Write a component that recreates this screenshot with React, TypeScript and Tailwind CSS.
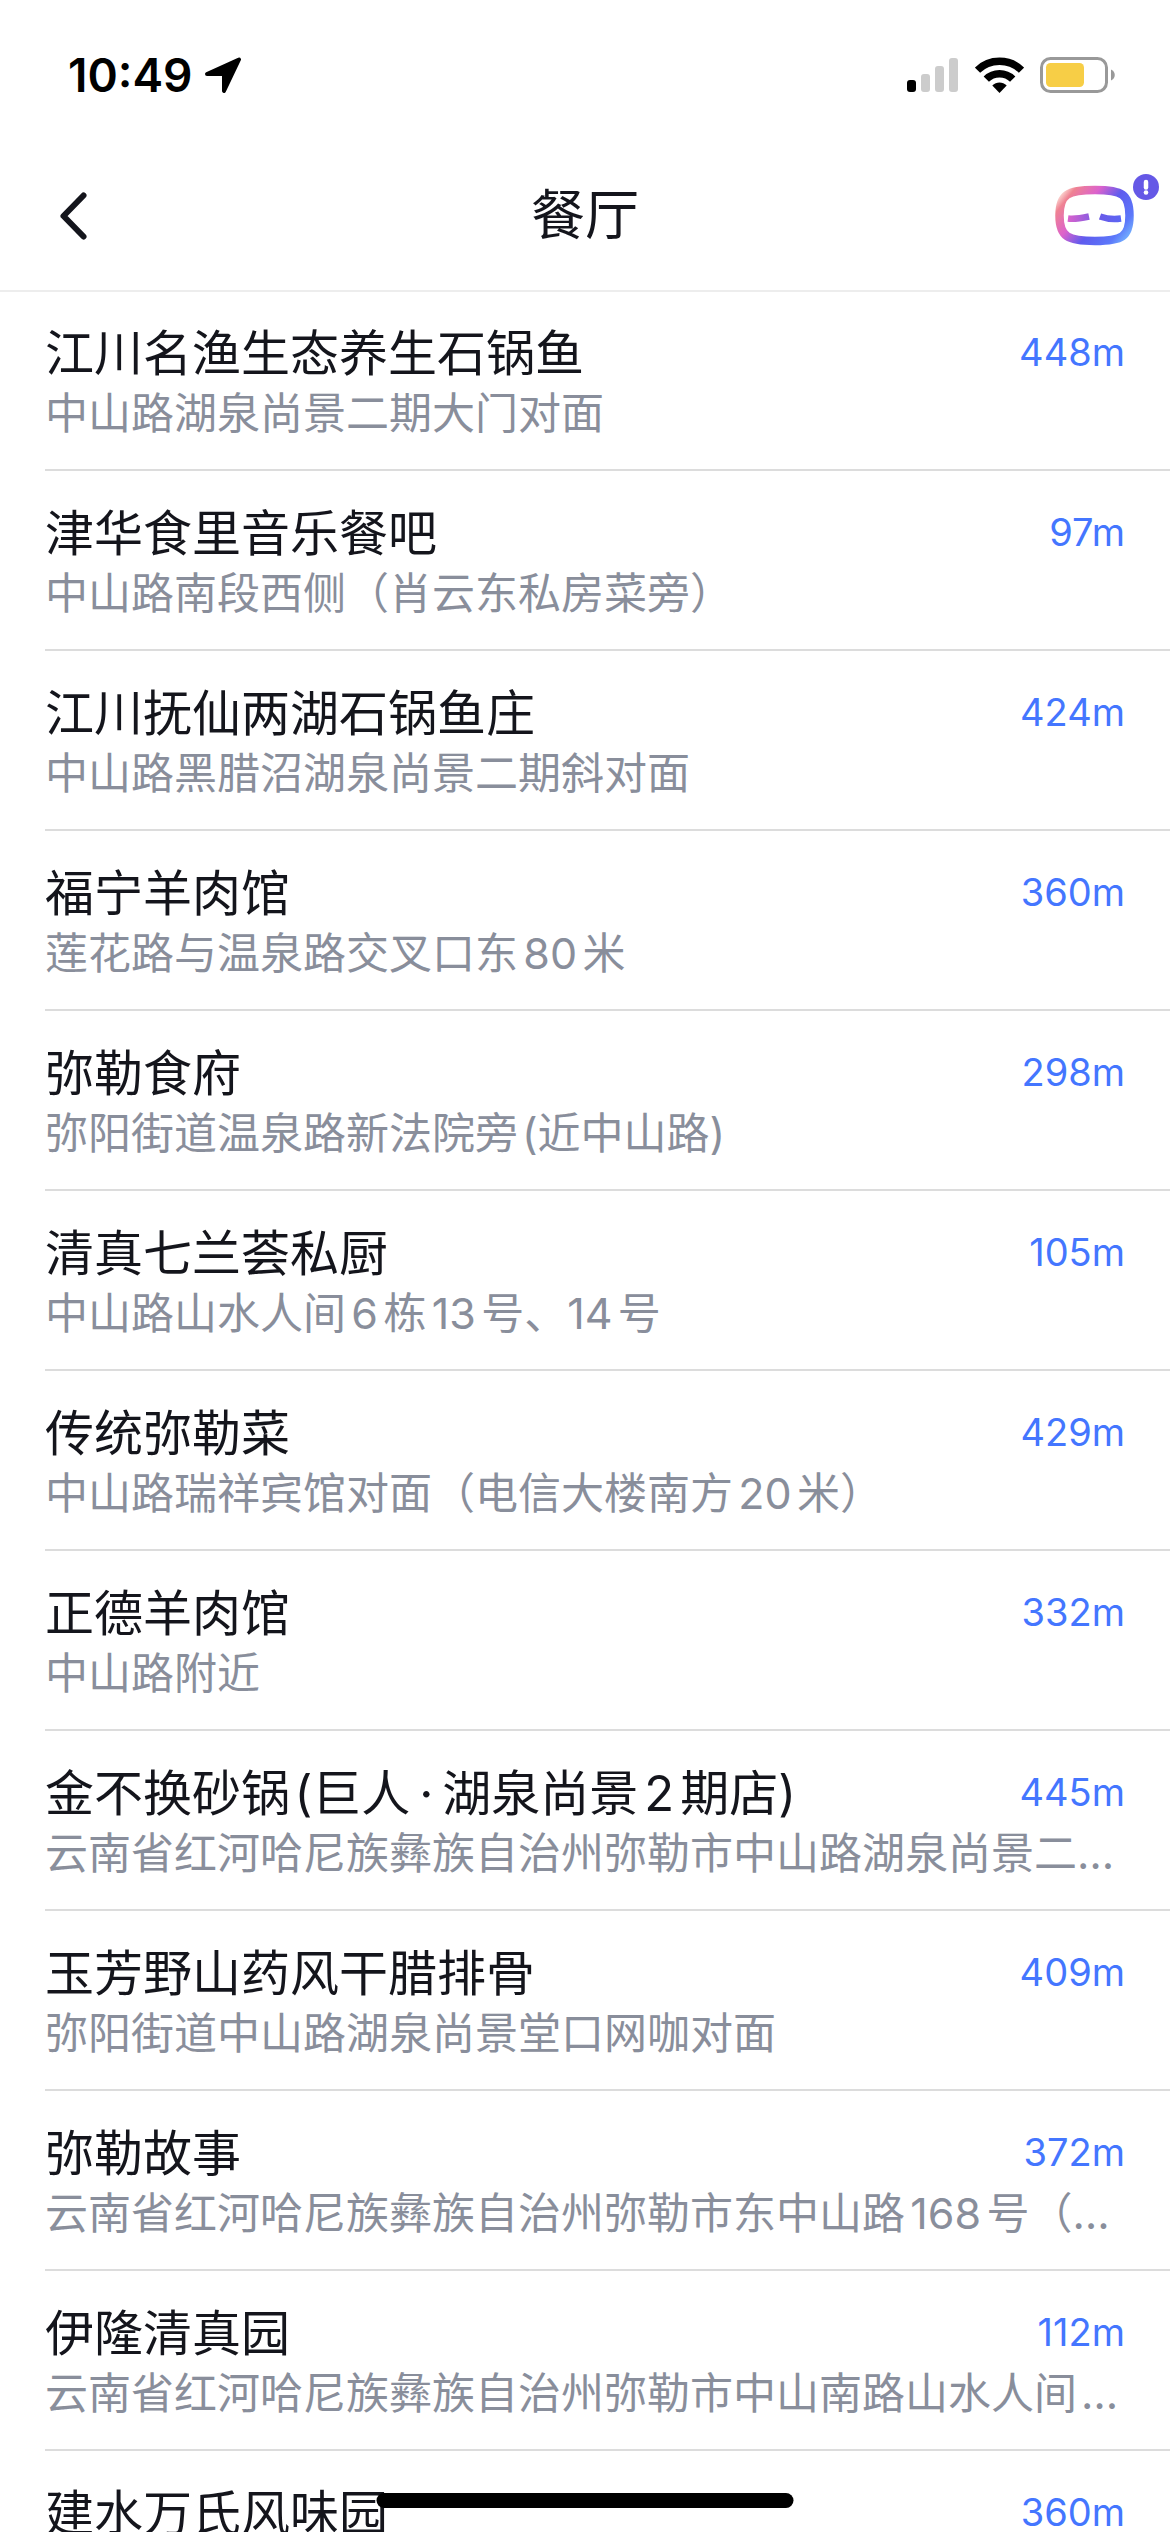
type Restaurant = {
  name: string;
  address?: string;
  distance: number;
};

// \u2009 and \u200a are the thin and hair spaces set around Latin punctuation
const restaurants: Restaurant[] = [
  { name: '江川名渔生态养生石锅鱼', address: '中山路湖泉尚景二期大门对面', distance: 448 },
  { name: '津华食里音乐餐吧', address: '中山路南段西侧（肖云东私房菜旁）', distance: 97 },
  { name: '江川抚仙两湖石锅鱼庄', address: '中山路黑腊沼湖泉尚景二期斜对面', distance: 424 },
  { name: '福宁羊肉馆', address: '莲花路与温泉路交叉口东80米', distance: 360 },
  { name: '弥勒食府', address: '弥阳街道温泉路新法院旁\u200a(近中山路)', distance: 298 },
  { name: '清真七兰荟私厨', address: '中山路山水人间6栋13号、14号', distance: 105 },
  { name: '传统弥勒菜', address: '中山路瑞祥宾馆对面（电信大楼南方20米）', distance: 429 },
  { name: '正德羊肉馆', address: '中山路附近', distance: 332 },
  { name: '金不换砂锅\u200a(巨人\u2009·\u2009湖泉尚景2期店)', address: '云南省红河哈尼族彝族自治州弥勒市中山路湖泉尚景二…', distance: 445 },
  { name: '玉芳野山药风干腊排骨', address: '弥阳街道中山路湖泉尚景堂口网咖对面', distance: 409 },
  { name: '弥勒故事', address: '云南省红河哈尼族彝族自治州弥勒市东中山路168号（…', distance: 372 },
  { name: '伊隆清真园', address: '云南省红河哈尼族彝族自治州弥勒市中山南路山水人间\u200a…', distance: 112 },
  { name: '建水万氏风味园', distance: 360 },
];

function StatusBar() {
  return (
    <div className="flex h-[142px] shrink-0 items-center justify-between pt-2 pr-[55px] pl-[68px] text-black">
      <div className="flex items-center gap-3">
        <span className="text-[46px] leading-none font-semibold">10:49</span>
        <svg className="h-9 w-9" viewBox="0 0 36 36" fill="currentColor" stroke="currentColor" strokeWidth="4" strokeLinejoin="round">
          <path d="M2 17 34 2.500 19 34V17Z" />
        </svg>
      </div>
      <div className="flex items-center gap-4">
        <svg className="h-9 w-[52px]" viewBox="0 0 52 36">
          <rect x="0" y="23" width="9" height="12" rx="3" fill="#000" />
          <rect x="14" y="17" width="9" height="18" rx="3" fill="#ccc" />
          <rect x="28" y="9" width="9" height="26" rx="3" fill="#ccc" />
          <rect x="42" y="1" width="9" height="34" rx="3" fill="#ccc" />
        </svg>
        <svg className="h-9 w-[49px]" viewBox="0 0 49 36">
          <g fill="none" stroke="#000" strokeWidth="7.500">
            <path d="M2.500 13.200C14.500 1.300 34.500 1.300 46.500 13.200" />
            <path d="M11.300 22.200C18.500 15 30.500 15 37.700 22.200" />
          </g>
          <path d="M17.300 28.500C21.300 24.500 27.700 24.500 31.700 28.500L24.500 36Z" fill="#000" />
        </svg>
        <svg className="h-9 w-[75px]" viewBox="0 0 75 36">
          <rect x="1.500" y="1.500" width="65" height="33" rx="9" fill="none" stroke="#999" strokeWidth="3" />
          <rect x="6" y="6" width="38" height="24" rx="4.500" fill="#f7ce46" />
          <path d="M71 12.500C76 14.500 76 21.500 71 23.500Z" fill="#999" />
        </svg>
      </div>
    </div>
  );
}

function AssistantIcon() {
  return (
    <svg className="h-[102px] w-[115px]" viewBox="0 0 115 102" fill="none">
      <defs>
        <linearGradient id="face" x1="8" y1="22" x2="76" y2="76" gradientUnits="userSpaceOnUse">
          <stop offset="0" stopColor="#fff3e6" />
          <stop offset="0.12" stopColor="#ef8292" />
          <stop offset="0.34" stopColor="#dc62cc" />
          <stop offset="0.56" stopColor="#5f5bee" />
          <stop offset="0.82" stopColor="#5c78fa" />
          <stop offset="1" stopColor="#7cc4ff" />
        </linearGradient>
        <linearGradient id="eyes" x1="12" y1="50" x2="67" y2="50" gradientUnits="userSpaceOnUse">
          <stop offset="0" stopColor="#dc62cc" />
          <stop offset="0.6" stopColor="#6a5be8" />
          <stop offset="1" stopColor="#5a66f5" />
        </linearGradient>
      </defs>
      <path
        d="M40 25C67 25 74.500 29 74.500 50.500C74.500 72 67 76 40 76C13 76 4.500 72 4.500 50.500C4.500 29 13 25 40 25Z"
        stroke="url(#face)"
        strokeWidth="8.500"
      />
      <path d="M13 53.500C20 54.500 27 53 34 51.500M45 51.500C52 54 59 54.500 66 53.500" stroke="url(#eyes)" strokeWidth="6.500" />
      <circle cx="91" cy="22" r="13" fill="#6558e6" />
      <path d="M91 17V22.500" stroke="#fff" strokeWidth="4.500" strokeLinecap="round" />
      <circle cx="91" cy="27.500" r="2.300" fill="#fff" />
    </svg>
  );
}

function NavBar() {
  return (
    <header className="grid h-[150px] shrink-0 grid-cols-[1fr_auto_1fr] items-center border-b-2 border-[#ededed]">
      <button type="button" aria-label="返回" className="ml-[46px] flex h-14 w-14 items-center justify-center justify-self-start">
        <svg className="h-14 w-14" viewBox="0 0 56 56" fill="none" stroke="currentColor" strokeWidth="6" strokeLinecap="round" strokeLinejoin="round">
          <path d="M37.500 7.500 17.500 28 37.500 48.500" />
        </svg>
      </button>
      <h1 className="text-[54px] leading-none">餐厅</h1>
      <button type="button" aria-label="助手" className="justify-self-end">
        <AssistantIcon />
      </button>
    </header>
  );
}

function RestaurantRow({ name, address, distance }: Restaurant) {
  return (
    <li className="border-b-2 border-[#dcdcdc] pt-[31px] pr-[45px] pb-[29px]">
      <div className="flex h-16 items-start justify-between">
        <h2 className="text-[49px] leading-[64px] whitespace-nowrap">{name}</h2>
        <span className="text-[38px] leading-[60px] text-[#4476ff]">{distance}m</span>
      </div>
      <p className="h-[54px] text-[43px] leading-[54px] whitespace-nowrap text-[#898e9b]">{address}</p>
    </li>
  );
}

export default function App() {
  return (
    <div className="relative flex h-screen flex-col overflow-hidden bg-white font-['Inter','Noto_Sans_CJK_SC',sans-serif] text-[#14151c] [text-autospace:normal]">
      <StatusBar />
      <NavBar />
      <ul className="-mt-px min-h-0 flex-1 overflow-hidden pl-[45px]">
        {restaurants.map((restaurant) => (
          <RestaurantRow key={restaurant.name} {...restaurant} />
        ))}
      </ul>
      {/* Home indicator */}
      <div className="absolute bottom-6 left-1/2 h-[15px] w-[417px] -translate-x-1/2 rounded-full bg-black" />
    </div>
  );
}
